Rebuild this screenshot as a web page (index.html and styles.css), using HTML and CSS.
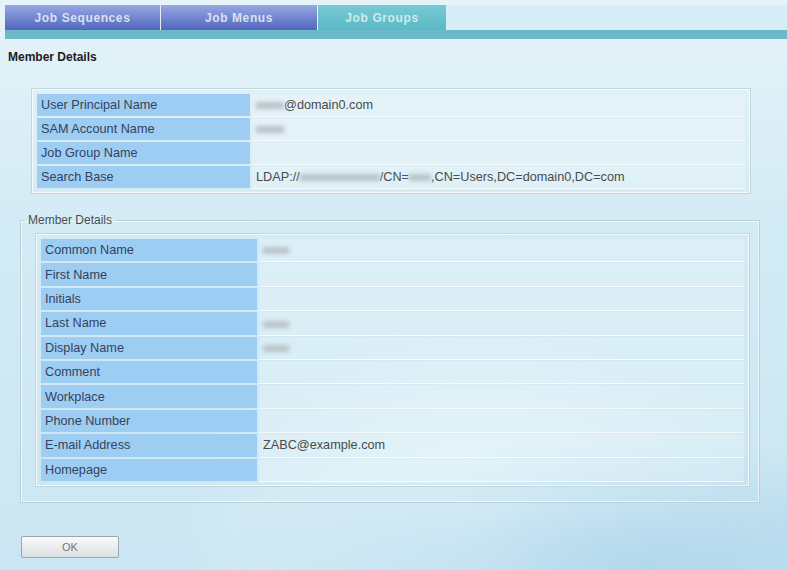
FILE: index.html
```html
<!DOCTYPE html>
<html lang="en">
<head>
  <meta charset="UTF-8" />
  <title>Member Details</title>
  <link rel="stylesheet" href="styles.css">
</head>
<body>

<div class="tabs">
  <a class="tab">Job Sequences</a>
  <a class="tab">Job Menus</a>
  <a class="tab active">Job Groups</a>
</div>
<div class="tab-bar"></div>

<h1 class="title">Member Details</h1>

<div class="box">
  <table class="details">
    <tr><th>User Principal Name</th><td><span class="hidden w28"></span>@domain0.com</td></tr>
    <tr><th>SAM Account Name</th><td><span class="hidden w28"></span></td></tr>
    <tr><th>Job Group Name</th><td></td></tr>
    <tr><th>Search Base</th><td>LDAP://<span class="hidden w80"></span>/CN=<span class="hidden w22"></span>,CN=Users,DC=domain0,DC=com</td></tr>
  </table>
</div>

<fieldset class="group">
  <legend>Member Details</legend>
  <div class="box inner">
    <table class="details">
      <tr><th>Common Name</th><td><span class="hidden w26"></span></td></tr>
      <tr><th>First Name</th><td></td></tr>
      <tr><th>Initials</th><td></td></tr>
      <tr><th>Last Name</th><td><span class="hidden w26"></span></td></tr>
      <tr><th>Display Name</th><td><span class="hidden w26"></span></td></tr>
      <tr><th>Comment</th><td></td></tr>
      <tr><th>Workplace</th><td></td></tr>
      <tr><th>Phone Number</th><td></td></tr>
      <tr><th>E-mail Address</th><td>ZABC@example.com</td></tr>
      <tr><th>Homepage</th><td></td></tr>
    </table>
  </div>
</fieldset>

<div class="actions">
  <button class="btn">OK</button>
</div>

</body>
</html>
```

FILE: styles.css
```css
body {
  margin: 0;
  width: 787px;
  height: 570px;
  overflow: hidden;
  font-family: 'Liberation Sans', Arial, sans-serif;
  font-size: 12px;
  color: #444;
  background:
    radial-gradient(ellipse 420px 120px at 640px 560px, rgba(150, 200, 230, 0.55), transparent),
    radial-gradient(ellipse 300px 200px at 480px 520px, rgba(235, 248, 252, 0.7), transparent),
    linear-gradient(to bottom, #e6f3f9 0%, #d3ebf5 40%, #cbe6f2 100%);
}

/* top navigation tabs */
.tabs {
  display: flex;
  margin: 5px 0 0 5px;
  height: 25px;
  background: #d6eef8;
}
.tab {
  display: flex;
  align-items: center;
  justify-content: center;
  height: 25px;
  color: #d9e0f2;
  font-weight: bold;
  letter-spacing: 0.6px;
  background: linear-gradient(to bottom, #97a8e2, #5266be);
  border-right: 1px solid #e6ecf8;
}
.tab:nth-child(1) { width: 155px; }
.tab:nth-child(2) { width: 156px; }
.tab.active {
  width: 128px;
  color: #cdebef;
  background: linear-gradient(to bottom, #79cad3, #5ab8c5);
  border-right: none;
}
.tab-bar {
  margin-left: 5px;
  height: 9px;
  background: #6cb9c9;
}

.title {
  margin: 0;
  padding: 11px 0 0 8px;
  height: 27px;
  font-size: 12px;
  font-weight: bold;
  color: #1c1c1c;
}

/* bordered table boxes */
.box {
  margin: 11px 0 0 31px;
  width: 712px;
  padding: 3px;
  border: 1px solid #c3d6de;
  box-shadow: inset 0 0 0 1px rgba(255, 255, 255, 0.7);
}
.details {
  width: 100%;
  border-collapse: separate;
  border-spacing: 2px;
  font-size: 12.7px;
}
.details th,
.details td {
  height: 22px;
  padding: 0 0 0 4px;
  text-align: left;
  font-weight: normal;
}
.details th {
  width: 209px;
  color: #35425c;
  background: #9ecdf4;
}
.details td {
  color: #4a4a4a;
  background: rgba(255, 255, 255, 0.22);
  box-shadow: 0 1px 0 rgba(255, 255, 255, 0.8);
}

.hidden {
  display: inline-block;
  height: 7px;
  vertical-align: middle;
  background: #b9c3c9;
  filter: blur(2px);
}
.w22 { width: 22px; }
.w26 { width: 26px; }
.w28 { width: 28px; }
.w80 { width: 80px; }

/* member details group */
.group {
  margin: 19px 0 0 20px;
  width: 738px;
  padding: 0 0 15px 0;
  border: 1px solid #bcd0d9;
  box-shadow: inset 0 0 0 1px rgba(255, 255, 255, 0.6);
}
.group legend {
  margin-left: 4px;
  padding: 0 3px;
  color: #4c4c4c;
}
.box.inner {
  margin: 6px 0 0 14px;
  width: 707px;
}
.box.inner .details th,
.box.inner .details td {
  height: 22.4px;
}
.box.inner .details th {
  width: 212px;
}

.actions {
  padding: 33px 0 0 21px;
}
.btn {
  width: 98px;
  height: 22px;
  font-family: 'Liberation Sans', Arial, sans-serif;
  font-size: 11px;
  color: #777;
  border: 1px solid #9aa6ad;
  border-radius: 2px;
  background: linear-gradient(to bottom, #fafafa, #dcdfe1);
}
```
